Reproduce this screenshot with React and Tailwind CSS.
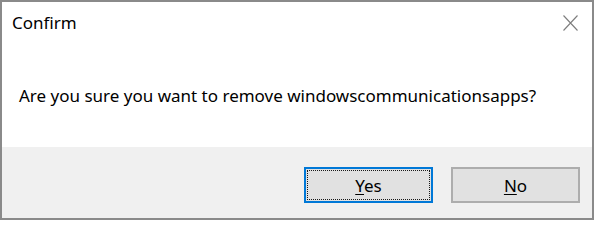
export default function App() {
  return (
    <div className="w-[596px] h-[222px] bg-white" style={{ fontFamily: '"Noto Sans", "Open Sans", sans-serif' }}>
      <div className="w-[594px] h-[220px] border-2 border-[#8a8a8a] flex flex-col bg-white">
        {/* Title bar */}
        <div className="flex items-start justify-between pt-[12px] pl-[10px] pr-[14px]">
          <span className="text-[17px] leading-none text-black">Confirm</span>
          <svg width="15" height="16" viewBox="0 0 15 16" className="mt-[1px]">
            <path d="M0.5 0.5 L14.5 15.5 M14.5 0.5 L0.5 15.5" stroke="#7d7d7d" strokeWidth="1.1" fill="none" />
          </svg>
        </div>

        {/* Message */}
        <div className="flex-1 pl-[17px] pt-[56px]">
          <p className="text-[17px] leading-none text-black">
            Are you sure you want to remove windowscommunicationsapps?
          </p>
        </div>

        {/* Buttons */}
        <div className="h-[71px] bg-[#f0f0f0] flex justify-end items-start gap-[18px] pt-[20px] pr-[12px]">
          <button className="w-[129px] h-[36px] bg-[#e1e1e1] border-2 border-[#0078d7] outline-1 outline-dotted outline-[#1a1a1a] -outline-offset-4 text-[17px] leading-none text-black">
            <span className="underline underline-offset-2">Y</span>es
          </button>
          <button className="w-[129px] h-[36px] bg-[#e1e1e1] border-2 border-[#adadad] text-[17px] leading-none text-black">
            <span className="underline underline-offset-2">N</span>o
          </button>
        </div>
      </div>
    </div>
  )
}
